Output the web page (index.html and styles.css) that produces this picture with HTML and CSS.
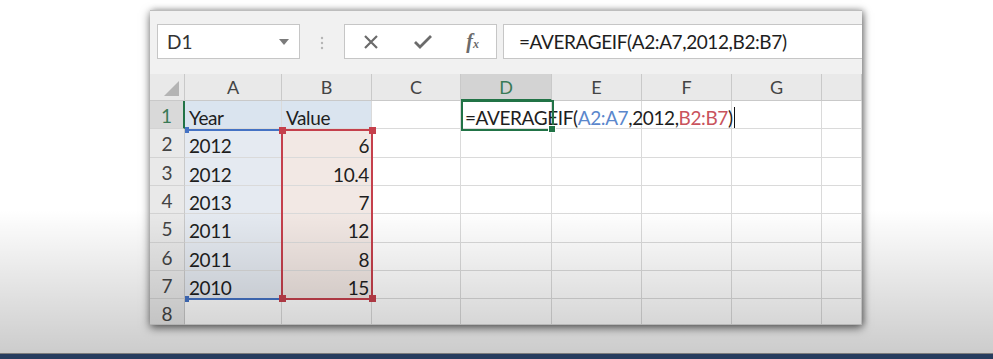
FILE: index.html
```html
<!DOCTYPE html>
<html lang="en">
<head>
  <meta charset="UTF-8">
  <meta name="viewport" content="width=device-width, initial-scale=1.0">
  <title>AVERAGEIF example</title>
  <link rel="stylesheet" href="styles.css">
</head>
<body>
  <div class="stage">
    <div class="window">
      <div class="toolbar">
        <div class="namebox">
          <span>D1</span>
          <svg class="drop" width="10" height="6" viewBox="0 0 10 6"><path d="M0 0h10L5 6z" fill="#7b7b7b"/></svg>
        </div>
        <div class="grip">
          <svg width="4" height="14" viewBox="0 0 4 14"><circle cx="2" cy="2" r="1.2" fill="#b5b5b5"/><circle cx="2" cy="7" r="1.2" fill="#b5b5b5"/><circle cx="2" cy="12" r="1.2" fill="#b5b5b5"/></svg>
        </div>
        <div class="fbuttons">
          <svg width="16" height="16" viewBox="0 0 16 16"><path d="M2 2l12 12M14 2L2 14" stroke="#6b6b6b" stroke-width="2.2" fill="none"/></svg>
          <svg width="20" height="16" viewBox="0 0 20 16"><path d="M2 8l5 5L18 2" stroke="#6b6b6b" stroke-width="2.8" fill="none"/></svg>
          <span class="fx">f<sub>x</sub></span>
        </div>
        <div class="fbar">=AVERAGEIF(A2:A7,2012,B2:B7)</div>
      </div>

      <div class="sheet">
        <div class="grid">
          <div class="hd corner"><span class="tri"></span></div>
          <div class="hd">A</div>
          <div class="hd">B</div>
          <div class="hd">C</div>
          <div class="hd active">D</div>
          <div class="hd">E</div>
          <div class="hd">F</div>
          <div class="hd">G</div>
          <div class="hd"></div>

          <div class="rh active">1</div>
          <div class="c sel-head">Year</div>
          <div class="c sel-head">Value</div>
          <div class="c"></div>
          <div class="c formula">=AVERAGEIF(<span class="ref-a">A2:A7</span>,2012,<span class="ref-b">B2:B7</span>)<span class="caret"></span></div>
          <div class="c"></div>
          <div class="c"></div>
          <div class="c"></div>
          <div class="c"></div>

          <div class="rh">2</div>
          <div class="c col-a">2012</div>
          <div class="c col-b num">6</div>
          <div class="c"></div><div class="c"></div><div class="c"></div><div class="c"></div><div class="c"></div><div class="c"></div>

          <div class="rh">3</div>
          <div class="c col-a">2012</div>
          <div class="c col-b num">10.4</div>
          <div class="c"></div><div class="c"></div><div class="c"></div><div class="c"></div><div class="c"></div><div class="c"></div>

          <div class="rh">4</div>
          <div class="c col-a">2013</div>
          <div class="c col-b num">7</div>
          <div class="c"></div><div class="c"></div><div class="c"></div><div class="c"></div><div class="c"></div><div class="c"></div>

          <div class="rh">5</div>
          <div class="c col-a">2011</div>
          <div class="c col-b num">12</div>
          <div class="c"></div><div class="c"></div><div class="c"></div><div class="c"></div><div class="c"></div><div class="c"></div>

          <div class="rh">6</div>
          <div class="c col-a">2011</div>
          <div class="c col-b num">8</div>
          <div class="c"></div><div class="c"></div><div class="c"></div><div class="c"></div><div class="c"></div><div class="c"></div>

          <div class="rh">7</div>
          <div class="c col-a">2010</div>
          <div class="c col-b num">15</div>
          <div class="c"></div><div class="c"></div><div class="c"></div><div class="c"></div><div class="c"></div><div class="c"></div>

          <div class="rh">8</div>
          <div class="c"></div><div class="c"></div><div class="c"></div><div class="c"></div><div class="c"></div><div class="c"></div><div class="c"></div><div class="c"></div>
        </div>

        <!-- range markers drawn over the cells -->
        <div class="range range-a"><i class="knob tl"></i><i class="knob bl"></i></div>
        <div class="range range-b"><i class="knob tl"></i><i class="knob tr"></i><i class="knob bl"></i><i class="knob br"></i></div>
        <div class="cursor-cell"><i class="handle"></i></div>
      </div>
    </div>
    <div class="shade"></div>
  </div>
  <div class="footer"></div>
</body>
</html>
```

FILE: styles.css
```css
body {
  margin: 0;
  background: #fff;
  font-family: Lato, "Open Sans", sans-serif;
  color: #1e1e1e;
}
.stage {
  position: relative;
  height: 353px;
  padding-top: 10px;
  box-sizing: border-box;
  overflow: hidden;
}
.window {
  margin-left: 150px;
  width: 712px;
  height: 315px;
  background: #f1f1f1;
  border-top: 1px solid #bdbdbd;
  box-sizing: border-box;
  box-shadow: 0 3px 9px rgba(0, 0, 0, 0.55), 2px 0 6px rgba(0, 0, 0, 0.25);
  overflow: hidden;
}

/* formula bar row */
.toolbar {
  display: flex;
  align-items: center;
  height: 35px;
  margin-top: 13px;
  padding-left: 7px;
}
.namebox {
  width: 143px;
  height: 35px;
  box-sizing: border-box;
  background: #fff;
  border: 1px solid #c6c6c6;
  display: flex;
  align-items: center;
  justify-content: space-between;
  padding: 0 10px 0 9px;
  font-size: 19px;
  color: #333;
}
.drop {
  margin-top: 1px;
}
.grip {
  width: 44px;
  display: flex;
  justify-content: center;
  padding-top: 2px;
}
.fbuttons {
  width: 153px;
  height: 35px;
  box-sizing: border-box;
  background: #fff;
  border: 1px solid #c6c6c6;
  display: flex;
  align-items: center;
  justify-content: space-between;
  padding: 0 17px 0 18px;
}
.fx {
  font-family: "Liberation Serif", serif;
  font-style: italic;
  font-size: 20px;
  color: #6b6b6b;
  font-weight: bold;
}
.fx sub {
  font-size: 12px;
  vertical-align: 0;
}
.fbar {
  flex: 1;
  height: 35px;
  box-sizing: border-box;
  margin-left: 6px;
  background: #fff;
  border: 1px solid #c6c6c6;
  border-right: none;
  font-size: 19px;
  letter-spacing: -0.4px;
  line-height: 33px;
  padding-left: 15px;
  color: #1e1e1e;
  white-space: nowrap;
}

/* sheet */
.sheet {
  position: relative;
  margin-top: 15px;
  height: 251px;
  background: #fff;
}
.grid {
  display: grid;
  grid-template-columns: 35px 97px 90px 89px 91px 90px 90px 90px 1fr;
  grid-template-rows: 27px 28px 29px 28px 28px 29px 28px 28px 26px;
}
.hd {
  background: #e9e9e9;
  border-right: 1px solid #c9c9c9;
  border-bottom: 1px solid #c9c9c9;
  box-sizing: border-box;
  text-align: center;
  font-size: 18px;
  line-height: 27px;
  color: #444;
}
.hd.active {
  background: #d3d3d3;
  color: #3a7a56;
  border-bottom: 2px solid #217346;
}
.corner {
  position: relative;
}
.tri {
  position: absolute;
  right: 5px;
  bottom: 4px;
  width: 0;
  height: 0;
  border-left: 15px solid transparent;
  border-bottom: 15px solid #b4b4b4;
}
.rh {
  background: #e9e9e9;
  border-right: 1px solid #c9c9c9;
  border-bottom: 1px solid #d3d3d3;
  box-sizing: border-box;
  text-align: center;
  font-size: 19px;
  line-height: 30px;
  color: #444;
}
.rh.active {
  background: #d9d9d9;
  color: #3a7a56;
  border-right: 2px solid #217346;
}
.c {
  border-right: 1px solid #dadada;
  border-bottom: 1px solid #dadada;
  box-sizing: border-box;
  font-size: 19px;
  letter-spacing: -0.4px;
  line-height: 28px;
  padding: 3px 4px 0;
  white-space: nowrap;
  color: #1e1e1e;
}
.num {
  text-align: right;
  padding-right: 2px;
}
.sel-head {
  background: #dae4ef;
}
.col-a {
  background: #e5eaf1;
}
.col-b {
  background: #f2e8e4;
}
.formula {
  position: relative;
  z-index: 2;
  overflow: visible;
}
.ref-a {
  color: #5b87cc;
}
.ref-b {
  color: #c9535d;
}
.caret {
  display: inline-block;
  width: 1px;
  height: 21px;
  background: #111;
  margin-left: 1px;
  vertical-align: -3px;
}

.range {
  position: absolute;
  top: 55px;
  height: 171px;
  box-sizing: border-box;
}
.range-a {
  left: 35px;
  width: 98px;
  border-top: 2px solid #4472c4;
  border-bottom: 2px solid #4472c4;
}
.range-b {
  left: 131px;
  width: 92px;
  border: 2px solid #c5404c;
}
.knob {
  position: absolute;
  width: 7px;
  height: 7px;
}
.range-a .knob {
  background: #4472c4;
  width: 4px;
  height: 6px;
}
.range-b .knob {
  background: #c5404c;
}
.knob.tl { left: -4px; top: -4px; }
.knob.tr { right: -5px; top: -4px; }
.knob.bl { left: -4px; bottom: -4px; }
.knob.br { right: -5px; bottom: -4px; }
.range-a .knob.tl,
.range-a .knob.bl { left: 0; }

.cursor-cell {
  position: absolute;
  left: 311px;
  top: 26px;
  width: 93px;
  height: 31px;
  border: 2px solid #217346;
  box-sizing: border-box;
  z-index: 3;
}
.handle {
  position: absolute;
  right: -4px;
  bottom: -4px;
  width: 6px;
  height: 6px;
  background: #217346;
  border: 1px solid #fff;
}

.shade {
  position: absolute;
  left: 0;
  right: 0;
  top: 0;
  bottom: 0;
  pointer-events: none;
  z-index: 10;
  background: linear-gradient(to bottom, rgba(0, 0, 0, 0) 0, rgba(0, 0, 0, 0) 210px, rgba(0, 0, 0, 0.2) 353px);
}
.footer {
  height: 6px;
  background: #273d5f;
  border-top: 1px solid #7d7d7d;
}
```
